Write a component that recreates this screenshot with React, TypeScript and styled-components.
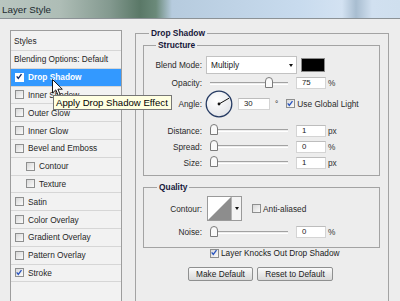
import React from 'react'
import styled, { createGlobalStyle } from 'styled-components'

const GlobalStyle = createGlobalStyle`
  html, body {
    margin: 0;
    padding: 0;
    background: #ededed;
  }
  body {
    font-family: 'Liberation Sans', Arial, sans-serif;
    font-size: 8.3px;
    color: #1a1a1a;
  }
`

const Window = styled.div`
  position: relative;
  width: 400px;
  height: 301px;
  overflow: hidden;
  background: #ededed;
`

const TitleBar = styled.div`
  height: 18px;
  border-bottom: 1px solid #8c9296;
  display: flex;
  align-items: center;
  padding-left: 2px;
  font-size: 9.8px;
  color: #1d2b30;
  background: linear-gradient(
    90deg,
    #b9c6c0 0px,
    #aebdb6 60px,
    #83998f 110px,
    #5a7867 140px,
    #6b8a7a 156px,
    #b6cbde 172px,
    #c8dbee 300px,
    #d3e2f2 342px,
    #a8bdd0 356px,
    #d1e0f0 372px,
    #cfdfee 400px
  );
`

const Body = styled.div`
  display: flex;
  align-items: flex-start;
  padding-left: 10px;
`

/* ---------- left styles list ---------- */

const StylesPanel = styled.div`
  margin-top: 11px;
  width: 112px;
  height: 290px;
  box-sizing: border-box;
  border: 1px solid #9d9d9d;
  background: #f2f2f2;
  display: flex;
  flex-direction: column;
`

const StyleRow = styled.div<{ $selected?: boolean; $indent?: boolean; $header?: boolean }>`
  height: ${(p) => (p.$header ? '19px' : '16.8px')};
  flex: none;
  display: flex;
  align-items: center;
  gap: 2px;
  padding-left: ${(p) => (p.$header ? '3px' : p.$indent ? '15px' : '4px')};
  border-bottom: 1px solid #d6d6d6;
  background: ${(p) => (p.$selected ? '#3399ff' : 'transparent')};
  color: ${(p) => (p.$selected ? '#ffffff' : '#262626')};
  font-weight: ${(p) => (p.$selected ? 'bold' : 'normal')};
  white-space: nowrap;
`

const Box = styled.span<{ $light?: boolean }>`
  width: 9px;
  height: 9px;
  flex: none;
  box-sizing: border-box;
  border: 1px solid ${(p) => (p.$light ? '#ffffff' : '#8e8f8f')};
  background: ${(p) => (p.$light ? '#ffffff' : 'linear-gradient(135deg, #d8d8d8, #fbfbfb)')};
  display: inline-flex;
  align-items: center;
  justify-content: center;
  margin-right: 2px;
`

const Check: React.FC<{ checked?: boolean; light?: boolean }> = ({ checked, light }) => (
  <Box $light={light}>
    {checked && (
      <svg width='9' height='9' viewBox='0 0 9 9' style={{ marginLeft: -1, marginTop: -1 }}>
        <path d='M1.9 4.4 L3.7 6.6 L7.3 1.8' fill='none' stroke={light ? '#102a6a' : '#2a55c0'} strokeWidth='1.5' />
      </svg>
    )}
  </Box>
)

const styleItems = [
  { label: 'Drop Shadow', checked: true, selected: true },
  { label: 'Inner Shadow' },
  { label: 'Outer Glow' },
  { label: 'Inner Glow' },
  { label: 'Bevel and Emboss' },
  { label: 'Contour', indent: true },
  { label: 'Texture', indent: true },
  { label: 'Satin' },
  { label: 'Color Overlay' },
  { label: 'Gradient Overlay' },
  { label: 'Pattern Overlay' },
  { label: 'Stroke', checked: true },
]

/* ---------- right settings ---------- */

const Group = styled.fieldset<{ $width: number; $padTop: number; $padBottom: number; $padLeft: number; $padRight: number }>`
  margin: 0;
  min-width: 0;
  width: ${(p) => p.$width}px;
  box-sizing: border-box;
  border: 1px solid #a3a3a3;
  padding: ${(p) => `${p.$padTop}px ${p.$padRight}px ${p.$padBottom}px ${p.$padLeft}px`};
`

const Legend = styled.legend<{ $offset: number }>`
  font-weight: bold;
  font-size: 8.4px;
  line-height: 10px;
  color: #17173a;
  padding: 0 2px;
  margin-left: ${(p) => p.$offset}px;
`

const OuterGroup = styled(Group)`
  margin-left: 13px;
  margin-top: 9px;
  height: 300px;
`

const InnerGroup = styled(Group)<{ $gapTop?: number }>`
  margin-top: ${(p) => p.$gapTop ?? 0}px;
`

const Row = styled.div<{ $h: number; $mt: number }>`
  display: flex;
  align-items: center;
  height: ${(p) => p.$h}px;
  margin-top: ${(p) => p.$mt}px;
  white-space: nowrap;
`

const Label = styled.span`
  width: 58px;
  margin-right: 4px;
  text-align: right;
  color: #2a2a2a;
  flex: none;
`

const Select = styled.div`
  width: 91px;
  height: 18px;
  box-sizing: border-box;
  border: 1px solid #c2c2c2;
  background: #ffffff;
  display: flex;
  align-items: center;
  justify-content: space-between;
  padding: 0 3px 0 4px;
`

const Arrow = styled.span`
  width: 0;
  height: 0;
  border-left: 2.5px solid transparent;
  border-right: 2.5px solid transparent;
  border-top: 3px solid #111;
`

const Swatch = styled.div`
  width: 24px;
  height: 14px;
  margin-left: 4px;
  box-sizing: border-box;
  border: 1px solid #8a8a8a;
  background: #000000;
`

const TextInput = styled.div<{ $w: number; $ml: number }>`
  width: ${(p) => p.$w}px;
  height: 12px;
  margin-left: ${(p) => p.$ml}px;
  box-sizing: border-box;
  border: 1px solid #d4d4d4;
  border-top-color: #bdbdbd;
  background: #ffffff;
  padding-left: 5px;
  line-height: 10px;
  font-size: 7.8px;
  color: #222;
`

const Unit = styled.span`
  margin-left: 2px;
  color: #333;
`

const Track = styled.div`
  position: relative;
  width: 78px;
  height: 1px;
  margin-left: 4px;
  border-top: 1px solid #a2a2a2;
  border-bottom: 1px solid #ffffff;
`

const Thumb = styled.svg`
  position: absolute;
  top: -6px;
`

const Slider: React.FC<{ value: number }> = ({ value }) => (
  <Track>
    <Thumb width='8' height='11' viewBox='0 0 8 11' style={{ left: value * 72 }}>
      <path d='M0.5 4 Q0.5 0.5 4 0.5 Q7.5 0.5 7.5 4 V10.5 H0.5 Z' fill='#fafafa' stroke='#7b7b7b' />
    </Thumb>
  </Track>
)

const Dial = styled.svg`
  flex: none;
  margin-left: -1px;
`

const Inline = styled.span<{ $ml: number }>`
  display: inline-flex;
  align-items: center;
  margin-left: ${(p) => p.$ml}px;
  color: #2a2a2a;
`

const ContourPicker = styled.div`
  display: flex;
  margin-left: 1px;
  height: 25px;
  box-sizing: border-box;
  border: 1px solid #9a9a9a;
  background: #ffffff;
`

const ContourDrop = styled.div`
  width: 9px;
  border-left: 1px solid #b5b5b5;
  background: #f4f4f4;
  display: flex;
  align-items: center;
  justify-content: center;
`

const ButtonRow = styled.div`
  display: flex;
  gap: 4px;
  margin-top: 9px;
  margin-left: 45px;
`

const Button = styled.div<{ $w: number }>`
  width: ${(p) => p.$w}px;
  height: 14px;
  box-sizing: border-box;
  border: 1px solid #8f9090;
  border-radius: 2px;
  background: linear-gradient(#fbfbfb, #e9e9e9 50%, #d9d9d9);
  display: flex;
  align-items: center;
  justify-content: center;
  color: #222;
`

/* ---------- overlays ---------- */

const Tooltip = styled.div`
  position: absolute;
  left: 53px;
  top: 95px;
  width: 119px;
  height: 15px;
  box-sizing: border-box;
  border: 1px solid #767676;
  background: #ffffe1;
  padding-left: 2px;
  font-size: 9.6px;
  line-height: 13px;
  color: #000;
  white-space: nowrap;
`

const Cursor = styled.svg`
  position: absolute;
  left: 52px;
  top: 79px;
`

const App: React.FC = () => {
  return (
    <Window>
      <GlobalStyle />
      <TitleBar>Layer Style</TitleBar>
      <Body>
        <StylesPanel>
          <StyleRow $header>Styles</StyleRow>
          <StyleRow $header={false} style={{ paddingLeft: 3 }}>
            Blending Options: Default
          </StyleRow>
          {styleItems.map((item) => (
            <StyleRow key={item.label} $selected={item.selected} $indent={item.indent}>
              <Check checked={item.checked} light={item.selected} />
              {item.label}
            </StyleRow>
          ))}
        </StylesPanel>

        <OuterGroup $width={254} $padTop={2} $padBottom={0} $padLeft={7} $padRight={8}>
          <Legend $offset={6}>Drop Shadow</Legend>

          <InnerGroup $width={237} $padTop={0} $padBottom={6} $padLeft={0} $padRight={0}>
            <Legend $offset={12}>Structure</Legend>
            <Row $h={18} $mt={6}>
              <Label>Blend Mode:</Label>
              <Select>
                Multiply
                <Arrow />
              </Select>
              <Swatch />
            </Row>
            <Row $h={12} $mt={3}>
              <Label>Opacity:</Label>
              <Slider value={0.77} />
              <TextInput $w={30} $ml={8}>75</TextInput>
              <Unit>%</Unit>
            </Row>
            <Row $h={29} $mt={0}>
              <Label>Angle:</Label>
              <Dial width='28' height='28' viewBox='0 0 28 28'>
                <defs>
                  <radialGradient id='dialFill' cx='40%' cy='35%' r='70%'>
                    <stop offset='0%' stopColor='#ffffff' />
                    <stop offset='100%' stopColor='#e2e4e8' />
                  </radialGradient>
                </defs>
                <circle cx='14' cy='14' r='12.8' fill='url(#dialFill)' stroke='#253a62' strokeWidth='1.3' />
                <line x1='14' y1='14' x2='24' y2='8.2' stroke='#111' strokeWidth='1' />
                <circle cx='14' cy='14' r='1.4' fill='#111' />
              </Dial>
              <TextInput $w={32} $ml={5}>30</TextInput>
              <Inline $ml={5}>°</Inline>
              <Inline $ml={8}>
                <Check checked />
                Use Global Light
              </Inline>
            </Row>
            <Row $h={13} $mt={6}>
              <Label>Distance:</Label>
              <Slider value={0} />
              <TextInput $w={30} $ml={8}>1</TextInput>
              <Unit>px</Unit>
            </Row>
            <Row $h={13} $mt={3}>
              <Label>Spread:</Label>
              <Slider value={0} />
              <TextInput $w={30} $ml={8}>0</TextInput>
              <Unit>%</Unit>
            </Row>
            <Row $h={13} $mt={3}>
              <Label>Size:</Label>
              <Slider value={0} />
              <TextInput $w={30} $ml={8}>1</TextInput>
              <Unit>px</Unit>
            </Row>
          </InnerGroup>

          <InnerGroup $gapTop={6} $width={237} $padTop={0} $padBottom={9} $padLeft={0} $padRight={0}>
            <Legend $offset={13}>Quality</Legend>
            <Row $h={25} $mt={4}>
              <Label>Contour:</Label>
              <ContourPicker>
                <svg width='23' height='23' viewBox='0 0 23 23'>
                  <polygon points='0,23 23,0 23,23' fill='#8d8d8d' />
                </svg>
                <ContourDrop>
                  <Arrow />
                </ContourDrop>
              </ContourPicker>
              <Inline $ml={10}>
                <Check />
                Anti-aliased
              </Inline>
            </Row>
            <Row $h={12} $mt={5}>
              <Label>Noise:</Label>
              <Slider value={0} />
              <TextInput $w={30} $ml={8}>0</TextInput>
              <Unit>%</Unit>
            </Row>
          </InnerGroup>

          <Row $h={10} $mt={0} style={{ marginLeft: 67 }}>
            <Check checked />
            Layer Knocks Out Drop Shadow
          </Row>
          <ButtonRow>
            <Button $w={65}>Make Default</Button>
            <Button $w={76}>Reset to Default</Button>
          </ButtonRow>
        </OuterGroup>
      </Body>

      <Cursor width='12' height='18' viewBox='0 0 12 18'>
        <path d='M0.5 0.5 L0.5 14 L3.8 10.9 L6.2 16.5 L8.2 15.6 L5.9 10.2 L10.3 10.2 Z' fill='#ffffff' stroke='#000' strokeWidth='0.9' />
      </Cursor>
      <Tooltip>Apply Drop Shadow Effect</Tooltip>
    </Window>
  )
}

export default App
